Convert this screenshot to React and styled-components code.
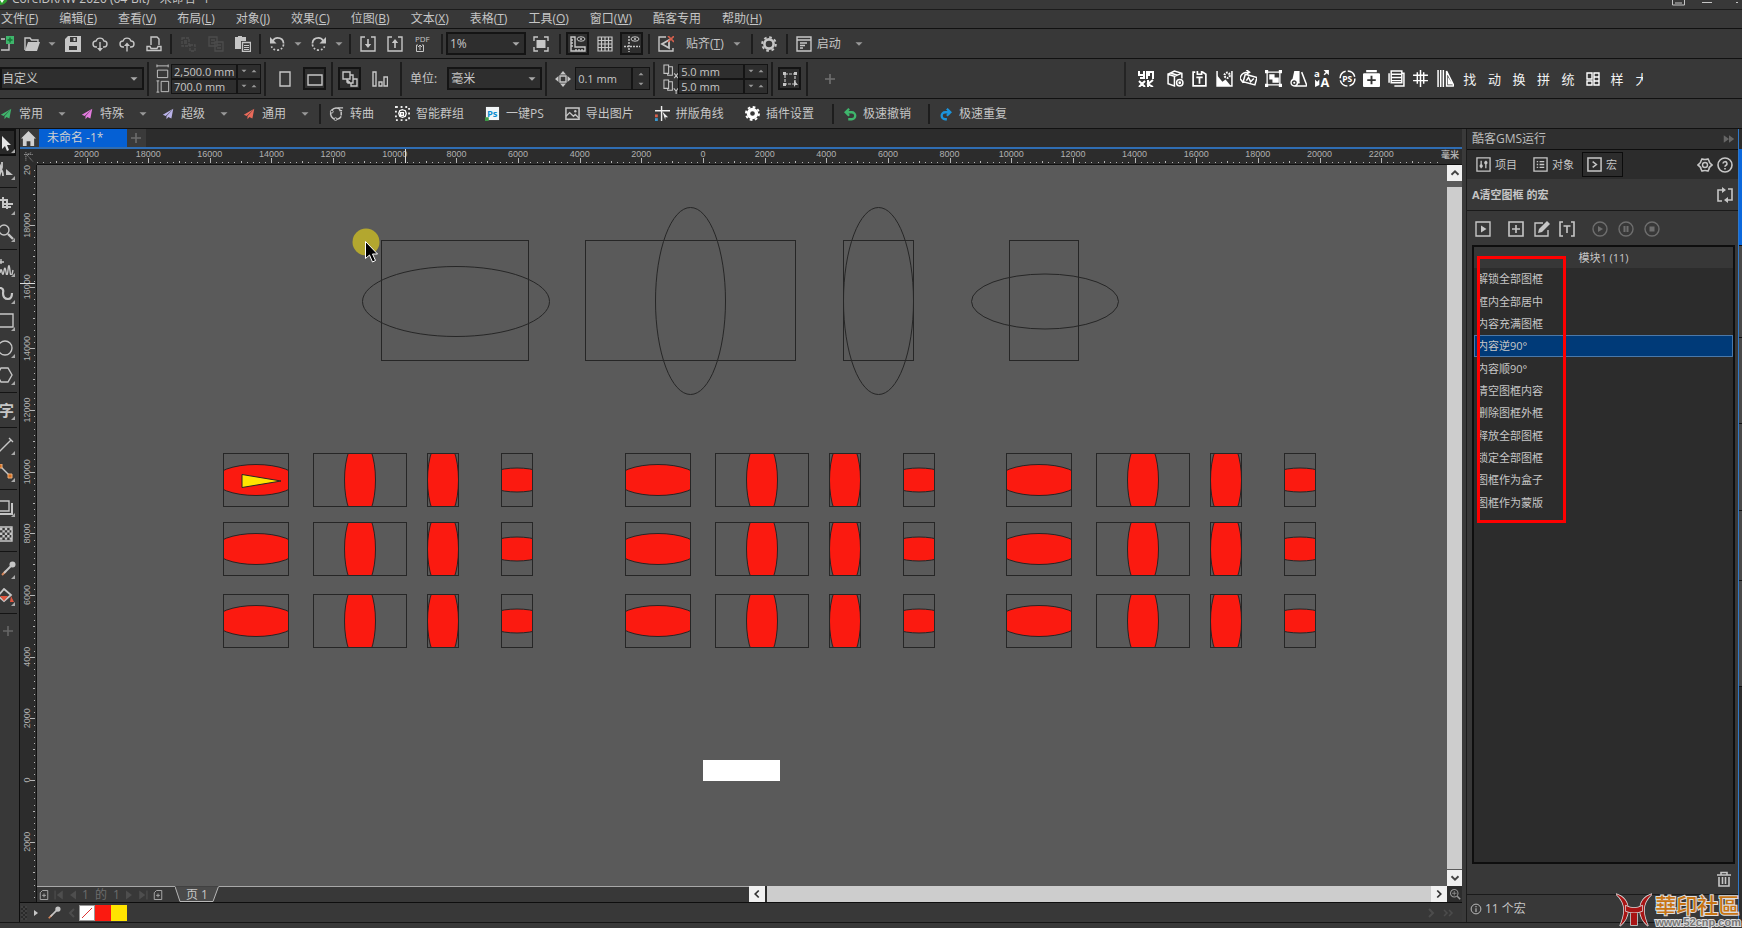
import React from "react";
import styled, { createGlobalStyle, css } from "styled-components";

const GlobalStyle = createGlobalStyle`
  * {
    box-sizing: border-box;
  }
  body {
    margin: 0;
    background: #383838;
    overflow: hidden;
  }
  button, input, select {
    font: inherit;
    color: inherit;
    margin: 0;
    padding: 0;
    border: 0;
    border-radius: 0;
    background: none;
    outline: none;
  }
  ul {
    list-style: none;
    margin: 0;
    padding: 0;
  }
`;

/* ---------- icons ---------- */

const line = { fill: "none", stroke: "currentColor", strokeWidth: 1.4 };
const white = { fill: "none", stroke: "#fff", strokeWidth: 1.4 };

const ICONS = {
  caret: <path fill="currentColor" d="M4 6h8l-4 4z" />,
  caretUp: <path fill="currentColor" d="M4 10h8l-4-4z" />,
  newDoc: <g><path {...line} d="M-4 3H4M-4 14H8V8" /><path fill="#3fb56c" d="M5 0h8v8H5z" /><path stroke="#173" strokeWidth="1.5" d="M9 1.5v5M6.5 4h5" /></g>,
  open: <g><path {...line} d="M1 14V2h5l1.5 2H14v2" /><path fill="currentColor" d="M4 6h12l-3 9H1z" /></g>,
  save: <g><path fill="currentColor" fillRule="evenodd" d="M3 0h13v16H0V3zM5 1v5h7V1zM4 10v4h8v-4z" /><path fill="currentColor" d="M8.5 2h2v3h-2z" /></g>,
  cloudDown: <g><path {...line} d="M5 11H4a3 3 0 0 1 0-6 4.2 4.2 0 0 1 8 0 3 3 0 0 1 0 6h-1" /><path fill="currentColor" d="M7.3 6h1.4v6H11l-3 3.5L5 12h2.3z" /></g>,
  cloudUp: <g><path {...line} d="M5 11H4a3 3 0 0 1 0-6 4.2 4.2 0 0 1 8 0 3 3 0 0 1 0 6h-1" /><path fill="currentColor" d="M7.3 15.5V10H5l3-3.5L11 10H8.7v5.5z" /></g>,
  print: <path {...line} d="M5 9V1h6l2 2v6M1 14.5v-4h3l1 2h6l1-2h3v4z" />,
  cut: <path {...line} strokeDasharray="3 1" d="M1 2h7v8H1zM3 5h3M3 7h3M9 9h5v6H9z" />,
  copy: <path {...line} d="M1 1h8v9H1zM3 4h4M3 7h4M7 6h8v9H7zM9 9h4M9 12h4" />,
  paste: <g><path fill="currentColor" d="M0 1h3V0h4v1h4v4H6v8H0z" /><path {...line} d="M7.5 6.5h8v9h-8z" /><path stroke="currentColor" d="M9 9.5h5M9 11.5h5M9 13.5h5" /></g>,
  undo: <g><path {...line} strokeWidth="1.8" d="M3 5q2-3 5-3 6 0 6.5 6" /><path {...line} strokeWidth="1.8" strokeDasharray="2 2" d="M14.5 9q-1 6-7 6-4 0-6-4" /><path fill="currentColor" d="M0 1v7h7z" /></g>,
  redo: <g><path {...line} strokeWidth="1.8" d="M13 5q-2-3-5-3-6 0-6.5 6" /><path {...line} strokeWidth="1.8" strokeDasharray="2 2" d="M1.5 9q1 6 7 6 4 0 6-4" /><path fill="currentColor" d="M16 1v7H9z" /></g>,
  importIcon: <g><path {...line} d="M5 1H1v14h14V1h-4" /><path fill="currentColor" d="M7.2 3h1.6v5h2.4L8 12 4.8 8h2.4z" /></g>,
  exportIcon: <g><path {...line} d="M5 1H1v14h14V1h-4" /><path fill="currentColor" d="M7.2 12h1.6V7h2.4L8 3 4.8 7h2.4z" /></g>,
  pdf: <g><text x="0" y="6" fontSize="8" fill="currentColor">PDF</text><path {...line} strokeWidth="1" d="M3 9H1.5v6.5h7V9H7M5 14V9M3 11l2-2 2 2" /></g>,
  fullscreen: <g><path {...line} d="M1 5V1h4M11 1h4v4M15 11v4h-4M5 15H1v-4" /><path fill="currentColor" d="M3.5 4h9v8h-9z" /></g>,
  rulers: <g><path {...line} d="M1 1h4v10h10v4H1zM1 4h2M1 7h2M1 10h2M6 15v-2M9 15v-2M12 15v-2" /><ellipse {...line} strokeWidth="1" cx="11" cy="3" rx="4" ry="2.2" /><circle cx="11" cy="3" r="1" fill="currentColor" /></g>,
  grid: <path {...line} strokeWidth="1.2" d="M1 1v14h14V1zM4.5 1v14M8 1v14M11.5 1v14M1 4.5h14M1 8h14M1 11.5h14" />,
  guides: <g><path {...line} strokeDasharray="2 1" d="M5 0v16M0 10.5h16" /><ellipse {...line} strokeWidth="1" cx="11" cy="3" rx="4" ry="2.2" /><circle cx="11" cy="3" r="1" fill="currentColor" /></g>,
  snap: <g><path {...line} d="M8 1H1v14h14v-3" /><path {...line} strokeWidth="1.8" d="M11 4L4 8l7 4z" /><path stroke="#d5604d" strokeWidth="1.6" d="M10 0l6 6M16 0l-6 6" /></g>,
  gear: <g><circle cx="8" cy="8" r="4.6" fill="none" stroke="currentColor" strokeWidth="2.6" /><circle cx="8" cy="8" r="6.8" fill="none" stroke="currentColor" strokeWidth="2" strokeDasharray="2.67 2.67" /></g>,
  launch: <path {...line} d="M1 1h14v14H1zM1 4h14M4 7h7M4 9.5h5M4 12h3" />,
  pageW: <path {...line} strokeWidth="1" d="M1 2h12M1 .5v3M13 .5v3M1.5 6.5h11v8h-11z" />,
  pageH: <path {...line} strokeWidth="1" d="M2 2v12M.5 2h3M.5 14h3M5.5 2.5h8v11h-8z" />,
  portrait: <path {...line} d="M3 1h10v14H3z" />,
  landscape: <path {...line} d="M1 4h14v10H1z" />,
  pagesAll: <path {...line} d="M1 1h7v7H1zM5 8v3h3M8 4h3v8H6V9M11 8h4v7H9v-3" />,
  pagesOne: <path {...line} d="M1 1v14h3V1zM7 11h3v4H7zM12 6h3.5v9H12z" />,
  nudge: <g><path {...line} d="M5 5h6v6H5z" /><path fill="currentColor" d="M8 0l3 3.5H5zM8 16l3-3.5H5zM0 8l3.5-3v6zM16 8l-3.5-3v6z" /></g>,
  dupX: <path {...line} strokeWidth="1.1" d="M1 1h5v9H1zM6 3h4v9H5v-2M12 10l4 5M16 10l-4 5" />,
  dupY: <path {...line} strokeWidth="1.1" d="M1 1h5v9H1zM6 3h4v9H5v-2M11.5 10l2.5 3 2-3M14 13v3" />,
  selectBox: <g><path {...line} strokeWidth="1.2" strokeDasharray="3 1" d="M3 3h10v10H3z" /><path fill="currentColor" d="M1 1h3v3H1zM12 1h3v3h-3zM1 12h3v3H1zM12 9v7l1.5-2H16z" /></g>,
  plus: <path stroke="currentColor" strokeWidth="1.6" d="M8 3v10M3 8h10" />,
  plane: <path fill="currentColor" d="M15 1 1 9l4 1.5zM15 1 6 11v4l2.5-3 4 2z" />,
  curve: <g><path {...line} strokeWidth="1.6" d="M12 4A6 6 0 1 0 13 11M13 10V6" /><path {...line} d="M9 2h6M11 5h3" /><circle cx="3" cy="6" r="1.5" fill="#383838" stroke="currentColor" /><circle cx="7" cy="14" r="1.5" fill="#383838" stroke="currentColor" /></g>,
  group: <g><rect x="1" y="1" width="14" height="14" fill="none" stroke="#eee" strokeWidth="2" strokeDasharray="2 3" /><path {...white} d="M8 4l3 1 1 3-1 3-3 1-3-1-1-3 1-3zM6 7h3v3H6z" /></g>,
  ps: <g><path fill="#f2f6f8" d="M1 1h14v14H1z" /><path fill="#3c9a46" d="M0 12h4v4H0z" /><text x="2" y="12" fontSize="10" fontWeight="bold" fill="#0c8ed0">Ps</text></g>,
  image: <g><path {...line} strokeWidth="1.6" d="M1 2h14v12H1z" /><path {...line} d="M1 11l4-4 4 4 2-2 4 4" /><circle cx="11" cy="5.5" r="1.3" fill="currentColor" /></g>,
  corner: <g><path stroke="#eee" strokeWidth="1.5" d="M7 0v16M0 5h16" /><path fill="#eee" d="M8 6l6 6h-3v3z" /><path fill="#d5604d" d="M0 9h3v3H0z" /><path fill="#3c9ad0" d="M0 13h3v3H0z" /></g>,
  gearSolid: <g><circle cx="8" cy="8" r="4.3" fill="none" stroke="#fff" strokeWidth="3.6" /><circle cx="8" cy="8" r="7" fill="none" stroke="#fff" strokeWidth="2" strokeDasharray="2.9 2.6" /></g>,
  turnBack: <path fill="none" stroke="currentColor" strokeWidth="2.6" d="M6 14h4a4 4 0 0 0 0-8H3M7 2L3 6l4 4" />,
  turnFwd: <path fill="none" stroke="currentColor" strokeWidth="2.6" d="M9 14H7a4 4 0 0 1 0-8h6M9 2l4 4-4 4" />,
  home: <path fill="currentColor" d="M8 0l8 8h-2v8h-4v-5H6v5H2V8H0z" />,
  origin: <path {...line} strokeDasharray="2 1" d="M3 0v14M0 4h14M5 5l9 10M4 4l8-3" />,
  // plug-in strip
  maze: <path {...white} strokeWidth="2" d="M1 0v4h5V0M6 4v3H2M9 8V1h2v4M11 1h4v7M1 10l6 6M7 10l-6 6M10 9v7M15 9l-5 4 5 3" />,
  boxGear: <g {...white}><path d="M1 4l6-3 7 2v5M1 4v9l6 2V6zM7 6l7-3M4 3l6 2" /><circle cx="12" cy="12" r="3" /><circle cx="12" cy="12" r=".6" /></g>,
  clipT: <path {...white} strokeWidth="1.6" d="M4 2H2v13h12V4l-3-2h-1M6 1v3h4V1M5 7h6M8 7v6" />,
  chartGear: <g><path {...white} d="M1 1v14h14V1" /><path fill="#fff" d="M1 5l5 6 3-2 5 6H1z" /><circle cx="10.5" cy="5" r="2.5" fill="none" stroke="#fff" strokeWidth="2" strokeDasharray="1.6 1" /></g>,
  rotateImg: <path {...white} d="M5 4l11 3-2 7L3 11zM0 8q1-6 8-6M6 0l3 2-3 2M6 10l2-3 2 4 3-3M0 8l3 4" />,
  frameSel: <g><path {...white} strokeWidth="1.2" d="M2 2h12v12H2z" /><path fill="#fff" d="M0 0h3v3H0zM13 0h3v3h-3zM0 13h3v3H0zM13 13h3v3h-3zM4 4h5v5H4zM7 7h6v5H7z" /></g>,
  roll: <g><path fill="#fff" d="M4 1h5v11l-3 1-4-3z" /><path {...white} d="M9 12H6M11 2l5 13H5" /><circle cx="4" cy="12" r="3" fill="#383838" stroke="#fff" strokeWidth="1.3" /><circle cx="4" cy="12" r="1" fill="#fff" /></g>,
  letters: <g fill="#fff"><text x="0" y="7" fontSize="9" fontWeight="bold">a</text><text x="6" y="16" fontSize="12" fontWeight="bold">A</text><path d="M9 0h5v5l-2-2-2 2-1-1 2-2zM1 16V9l2 2 2-2v5z" /></g>,
  psRound: <g><circle cx="8" cy="8" r="7" fill="none" stroke="#fff" strokeWidth="1.4" strokeDasharray="9 2" /><text x="3" y="11" fontSize="8" fontWeight="bold" fill="#fff">PS</text></g>,
  kit: <g><path fill="#fff" d="M3 0h10v2H3zM1 3h14q1 0 1 1v11q0 1-1 1H1q-1 0-1-1V4q0-1 1-1z" /><path stroke="#333" strokeWidth="1.8" d="M8 5.5v8M4 9.5h8" /></g>,
  docLines: <path {...white} d="M3 1h10v11H3zM3 4h10M3 7h10M3 10h10M13 3h2v12H6M1 3v9" />,
  hash: <path {...white} d="M8 0v16M1 5h14M1 10h14M5 2v11M11 2v11" />,
  ruleTri: <path {...white} d="M1 0v16M3.5 0v16M6 0v16M9 1v14h7zM11 9v4h2.5z" />,
  blocks: <path {...white} d="M2 2h5v6H2zM2 10h5v4H2zM9 2h5v4H9zM9 6h5v8H9zM9 10h5" />,
  // docker
  sliders: <g><path {...line} d="M1 1h14v14H1zM5.5 4v8M10.5 4v8" /><circle cx="5.5" cy="9.5" r="1.8" fill="currentColor" /><circle cx="10.5" cy="6" r="1.8" fill="currentColor" /></g>,
  objects: <path {...line} d="M1 1h14v14H1zM4 5h1.5M4 8h1.5M4 11h1.5M7 5h5M7 8h5M7 11h5" />,
  macro: <path {...line} strokeWidth="1.6" d="M1 1h14v14H1zM6 5l4 3-4 3" />,
  hexGear: <g><path {...line} strokeWidth="1.6" d="M5 2q3 1 6 0l1 2q0 2 3 4-3 2-3 4l-1 2q-3-1-6 0l-1-2q0-2-3-4 3-2 3-4z" /><circle {...line} cx="8" cy="8" r="2.5" /></g>,
  help: <g><circle {...line} strokeWidth="1.6" cx="8" cy="8" r="7" /><path {...line} strokeWidth="1.6" d="M6 6.5a2 2 0 1 1 2.8 2q-.8.4-.8 1.2M8 11v1.5" /></g>,
  loop: <g><path {...line} strokeWidth="1.6" d="M5 14H1V3h5M11 2h4v11h-5" /><path fill="currentColor" d="M5 0l4 3-4 3zM11 10l-4 3 4 3z" /></g>,
  runBox: <g><path {...line} d="M1 1h14v14H1z" /><path fill="currentColor" d="M6 4.5L11.5 8 6 11.5z" /></g>,
  addBox: <path {...line} strokeWidth="1.6" d="M1 1h14v14H1zM8 4v8M4 8h8" />,
  edit: <g><path {...line} d="M9 2H1v13h13V9" /><path fill="currentColor" d="M4 12l1-4 8-8 3 3-8 8z" /></g>,
  rename: <path {...line} strokeWidth="1.6" d="M4 1H1v14h3M12 1h3v14h-3M4.5 5h7M8 5v7" />,
  play: <g><circle {...line} cx="8" cy="8" r="7" /><path fill="currentColor" d="M6 5l5 3-5 3z" /></g>,
  pause: <g><circle {...line} cx="8" cy="8" r="7" /><path fill="currentColor" d="M5.5 5h2v6h-2zM8.5 5h2v6h-2z" /></g>,
  stop: <g><circle {...line} cx="8" cy="8" r="7" /><path fill="currentColor" d="M5.5 5.5h5v5h-5z" /></g>,
  trash: <path {...line} strokeWidth="1.6" d="M1 4h14M5 4V1.5h6V4M3 6v9h10V6M6.5 6v7M9.5 6v7" />,
  info: <g><circle {...line} strokeWidth="1.2" cx="8" cy="8" r="6.5" /><path {...line} d="M8 7v5M8 4v1.5" /></g>,
  collapse: <path fill="currentColor" d="M1 3l7 5-7 5zM8 3l7 5-7 5z" />,
  // scroll bars and page navigator
  up: <path fill="none" stroke="#444" strokeWidth="2.2" d="M4 10l4-4 4 4" />,
  down: <path fill="none" stroke="#444" strokeWidth="2.2" d="M4 6l4 4 4-4" />,
  left: <path fill="none" stroke="currentColor" strokeWidth="2" d="M10 4L6 8l4 4" />,
  right: <path fill="none" stroke="currentColor" strokeWidth="2" d="M6 4l4 4-4 4" />,
  right2: <path fill="none" stroke="currentColor" strokeWidth="1.5" d="M3 5l3 3-3 3M8 5l3 3-3 3" />,
  zoomAll: <g><circle {...line} cx="7" cy="7" r="5" /><path {...line} strokeWidth="1" d="M7 4v6M4 7h6" /><path {...line} strokeWidth="2" d="M11 11l4 4" /></g>,
  pageAdd: <path {...line} strokeWidth="1.3" d="M6 2h7v12H3V5zM8 6v5M5.5 8.5h5" />,
  first: <path fill="currentColor" d="M2 2h1.5v12H2zM13 2v12L5 8z" />,
  prev: <path fill="currentColor" d="M12 2v12L4 8z" />,
  next: <path fill="currentColor" d="M4 2v12l8-6z" />,
  last: <path fill="currentColor" d="M12.5 2H14v12h-1.5zM3 2v12l8-6z" />,
  dropper: <g><path stroke="#d8875b" strokeWidth="2" d="M2 14l4-4" /><path stroke="currentColor" strokeWidth="2" d="M4 12l7-7" /><circle cx="12.5" cy="3.5" r="3" fill="currentColor" /></g>,
  // toolbox, partly hidden by the window edge
  pick: <path fill="#e4e4e4" d="M2 1v13l3-3 2 5 2-1-2-5h4z" />,
  shape: <g><path {...line} strokeWidth="1.8" d="M-2 2q3 0 2 5M2 0v5l-3 10M0 7q3 1 3 7" /><path fill="currentColor" d="M6 7l7 6H6z" /></g>,
  crop: <path {...line} strokeWidth="2" d="M-2 3H7v4M3 0v7h10M7 7v5M3 7v3h8" />,
  zoom: <g><circle {...line} cx="4" cy="6" r="5" /><path {...line} strokeWidth="2.4" d="M8 10l5 5" /></g>,
  freehand: <path {...line} d="M1 0v5M-2 3h6M0 14q1-6 2-1t2-1 2 1 2-2 2 1 3-1" />,
  bezier: <path {...line} strokeWidth="2.2" d="M-2 2H1q3 1 2 5 0 6 5 6 4 0 4-6" />,
  rect: <path {...line} d="M-2 1h15v13H-2" />,
  ellipse: <circle {...line} cx="5" cy="8" r="7" />,
  polygon: <path {...line} d="M1 1h7l4 7-4 7H1l-4-7z" />,
  lineTool: <path {...line} d="M-1 15L11 3M9 1l4 4" />,
  connector: <g><path {...line} d="M1 3l9 9" /><path fill="#d96f1e" stroke="#e8b080" d="M-2 0h4v4h-4zM8 10h4v4H8z" /></g>,
  shadow: <g><path {...line} d="M-2 2h11v10H-2" /><path {...line} strokeWidth="2" d="M12 4v11H0" /></g>,
  checker: <g><path {...line} d="M-2 1h14v14H-2" /><path stroke="currentColor" strokeWidth="2.4" strokeDasharray="2.4 2.4" d="M0 3h12M2.4 5.4h10M0 7.8h12M2.4 10.2h10M0 12.6h12" /></g>,
  fill: <g><path {...line} strokeWidth="1.8" d="M4 1l7 6-7 6-6-5z" /><path fill="#e0563f" d="M0 8h8l-4 5zM11 8l3 6h-4z" /></g>,
};

function Icon({ name, size = 16, color }) {
  return (
    <svg width={size} height={size} viewBox="0 0 16 16" color={color} aria-hidden="true">
      {ICONS[name]}
    </svg>
  );
}

/* ---------- shared parts ---------- */

const Window = styled.div`
  position: relative;
  display: flex;
  flex-direction: column;
  height: 100vh;
  overflow: hidden;
  background: #383838;
  color: #c6c6c6;
  font: 12px/16px "Open Sans", "Noto Sans CJK SC", sans-serif;
  white-space: nowrap;

  svg {
    display: block;
    flex: none;
  }
`;

const TitleBar = styled.header`
  display: flex;
  align-items: flex-end;
  height: 10px;
  overflow: hidden;
  border-bottom: 1px solid #1c1c1c;

  svg {
    margin-right: 4px;
  }
  span {
    flex: 1;
    height: 18px;
  }
`;

const MenuBar = styled.nav`
  display: flex;
  align-items: center;
  gap: 21px;
  height: 19px;
  padding-left: 1px;
  border-bottom: 1px solid #111;
`;

const Bar = styled.div`
  display: flex;
  align-items: center;
  height: ${(p) => p.$h || 30}px;
  border-bottom: 1px solid #111;
`;

const Sep = styled.i`
  flex: none;
  width: 2px;
  height: ${(p) => p.$h || 20}px;
  margin: 0 3px;
  background: #1d1d1d;
`;

const IconButton = styled.button`
  flex: none;
  display: flex;
  align-items: center;
  justify-content: center;
  width: ${(p) => p.$w || 27}px;
  height: 22px;
  color: ${(p) => (p.disabled ? "#4c4c4c" : "#c6c6c6")};
  ${(p) =>
    p.$on &&
    css`
      width: 23px;
      height: 23px;
      margin: 0 2px;
      border: 2px solid #141414;
      background: #2e2e2e;
    `}
`;

const CaretButton = styled(IconButton)`
  width: 14px;
  justify-content: flex-start;
  color: #999;
`;

const TextButton = styled.button`
  display: flex;
  align-items: center;
  gap: ${(p) => p.$gap || 6}px;
  padding: ${(p) => p.$pad || "0"};
`;

const PlaneButton = styled(TextButton)`
  width: ${(p) => (p.$last ? 73 : 81)}px;
  gap: 7px;

  svg:last-child {
    margin-left: 5px;
  }
`;

const PluginButtons = styled.div`
  display: flex;
  align-items: center;
  gap: 21px;
  padding: 0 15px 0 5px;
`;

const Combo = styled.label`
  position: relative;
  flex: none;
  display: block;
  width: ${(p) => p.$w}px;
  height: 23px;
  border: 2px solid #141414;
  background: #2e2e2e;

  select {
    appearance: none;
    width: 100%;
    height: 19px;
    padding-left: ${(p) => p.$left ?? 2}px;
  }
  svg {
    position: absolute;
    right: 1px;
    top: 3px;
    color: #aaa;
    pointer-events: none;
  }
`;

const Spin = styled.label`
  flex: none;
  display: flex;
  align-items: center;
  width: ${(p) => p.$w}px;
  height: ${(p) => p.$h || 15}px;
  border: 1px solid #141414;
  background: #2e2e2e;
  font-size: 11px;

  input {
    flex: 1;
    min-width: 0;
    height: 100%;
    padding-left: 2px;
    border-right: 2px solid #141414;
  }
  > span {
    display: flex;
    flex-direction: ${(p) => (p.$h ? "column" : "row")};
    justify-content: center;
    width: ${(p) => (p.$h ? 16 : 22)}px;
    align-items: center;
    color: #999;
  }
`;

const Stack = styled.div`
  display: flex;
  flex-direction: column;
  justify-content: center;
  margin: ${(p) => p.$m || "0"};
`;

const UnitLabel = styled.span`
  margin: 0 10px 0 5px;
`;

const PluginStrip = styled.div`
  display: flex;
  align-items: center;
  margin-left: auto;
  margin-right: 88px;
  padding-left: 6px;
  height: 34px;
  border-left: 2px solid #242424;

  > div {
    display: flex;
    width: 491px;
    margin-left: 3px;
  }
  > div > button {
    flex: 1;
    min-width: 0;
  }
`;

const Glyph = styled.button`
  height: 22px;
  overflow: hidden;
  color: #f2f2f2;
  font-size: 13px;
  line-height: 20px;
  text-align: center;

  span {
    display: block;
    width: ${(p) => (p.$cut ? "8px" : "auto")};
    margin-left: ${(p) => (p.$cut ? 6 : 0)}px;
    overflow: hidden;
  }
`;

const Workspace = styled.div`
  flex: 1;
  min-height: 0;
  display: flex;
`;

const StatusStrip = styled.footer`
  height: 6px;
  border-top: 1px solid #161616;
`;

/* ---------- toolbox ---------- */

const ToolColumn = styled.aside`
  flex: none;
  width: 20px;
  border-right: 1px solid #0e0e0e;

  hr {
    height: 1px;
    margin: 4px 2px 3px 0;
    border: 0;
    background: #141414;
  }
`;

const Tool = styled.button`
  display: block;
  position: relative;
  width: 16px;
  height: 27px;
  color: ${(p) => (p.$dim ? "#666" : "#c6c6c6")};
  font-size: 15px;
  font-weight: bold;
  ${(p) =>
    p.$on &&
    css`
      background: #282828;
      box-shadow: inset 0 2px #111, inset -2px 0 #111, inset 0 -2px #111;
    `}

  em {
    display: block;
    margin-left: -3px;
    font-style: normal;
  }
  &::after {
    content: "";
    position: absolute;
    right: 1px;
    bottom: 3px;
    border: 2px solid transparent;
    border-right-color: #aaa;
    border-bottom-color: #aaa;
    display: ${(p) => (p.$flat ? "none" : "block")};
  }
`;

/* ---------- document ---------- */

const Doc = styled.main`
  flex: 1;
  min-width: 0;
  display: flex;
  flex-direction: column;
  background: #2c2c2c;
`;

const DocTabs = styled.div`
  display: flex;
  height: 20px;
  border-bottom: 2px solid #2f6db3;
`;

const DocTab = styled.button`
  width: ${(p) => p.$w}px;
  padding-left: ${(p) => (p.$active ? 8 : 1)}px;
  text-align: left;
  background: ${(p) => (p.$active ? "#0560d4" : "#3a3a3a")};
  color: ${(p) => (p.$dim ? "#6d6d6d" : "#d0d0d0")};
`;

const Frame = styled.div`
  flex: 1;
  min-height: 0;
  display: grid;
  grid-template-columns: 17px 1fr 15px;
  grid-template-rows: 16px 1fr 16px;

  > svg {
    width: 100%;
    height: 100%;
  }
`;

const Corner = styled.div`
  display: flex;
  align-items: center;
  justify-content: center;
  color: #999;
`;

const TopRuler = styled.svg`
  grid-column: 2 / 4;
  border-bottom: 1px solid #111;
  font-family: "Liberation Sans", "Noto Sans CJK SC", sans-serif;
`;

const SideRuler = styled.svg`
  grid-row: 2 / 4;
  grid-column: 1;
  border-right: 1px solid #111;
  font-family: "Liberation Sans", sans-serif;
`;

const Canvas = styled.svg`
  background: #5a5a5a;
`;

const VScroll = styled.div`
  display: flex;
  flex-direction: column;
  background: #5a5a5a;
`;

const ScrollButton = styled.button`
  flex: none;
  display: flex;
  align-items: center;
  justify-content: center;
  width: ${(p) => p.$w || 15}px;
  height: 16px;
  background: #f0f0f0;
  color: #333;
`;

const VThumb = styled.div`
  flex: 1;
  margin: 6px 0 1px;
  background: #cdcdcd;
`;

const HThumb = styled.div`
  flex: 1;
  margin-left: 2px;
  background: #cdcdcd;
`;

const PageRow = styled.div`
  display: grid;
  grid-template-columns: 712fr 698fr;
`;

const PageNav = styled.div`
  display: flex;
  min-width: 0;
  background: #383838;
`;

const NavButtons = styled.div`
  display: flex;
  align-items: center;
  justify-content: space-between;
  width: 138px;
  padding: 0 11px 0 1px;
  border-top: 1px solid #a8a8a8;
  color: #4e4e4e;

  button:first-child, button:last-child {
    color: #a8a8a8;
  }
`;

const PageCount = styled.div`
  display: flex;
  gap: 6px;
  color: #6c6c6c;
`;

const PageTab = styled.button`
  position: relative;
  width: 44px;
  color: #c6c6c6;
  line-height: 15px;

  svg {
    position: absolute;
    inset: 0;
  }
  span {
    position: relative;
  }
`;

const NavRest = styled.div`
  flex: 1;
  border-top: 1px solid #a8a8a8;
`;

const HScroll = styled.div`
  display: flex;
`;

const Palette = styled.div`
  display: flex;
  align-items: center;
  height: 20px;
  padding: 0 6px 0 1px;
  border-top: 1px solid #0e0e0e;
  background: #383838;
`;

const Grip = styled.i`
  width: 6px;
  height: 14px;
  background: repeating-conic-gradient(#2a2a2a 0 25%, #404040 0 50%) 0 0 / 4px 4px;
`;

const Swatch = styled.button`
  width: 16px;
  height: 16px;
  background: ${(p) => p.$color};
  border: 1px solid ${(p) => (p.$none ? "#999" : p.$color)};
`;

const PaletteEnd = styled.div`
  display: flex;
  margin-left: auto;
`;

/* ---------- docker ---------- */

const Docker = styled.aside`
  position: relative;
  flex: none;
  display: flex;
  flex-direction: column;
  width: 276px;
  border-left: 4px solid #3a3a3a;
  box-shadow: inset 1px 0 #1c1c1c;
  padding-left: 1px;
`;

const DockHead = styled.div`
  display: flex;
  align-items: center;
  justify-content: space-between;
  height: 21px;
  padding: 0 3px 0 5px;
  border-bottom: 1px solid #0e0e0e;
  background: #2f2f2f;
  color: #bdbdbd;
`;

const DockTabs = styled.div`
  display: flex;
  align-items: center;
  height: 29px;
  padding: 0 3px 0 4px;
  background: #2c2c2c;
  font-size: 11px;
`;

const DockTab = styled.button`
  display: flex;
  align-items: center;
  gap: 4px;
  height: 25px;
  padding: 0 5px 0 4px;
  margin-right: 5px;
  border: 1px solid transparent;

  &:nth-child(2) {
    margin-right: 2px;
  }
  &:nth-child(3) {
    margin-right: auto;
    border-color: #0c0c0c;
  }
`;

const DockTitle = styled.h2`
  display: flex;
  align-items: center;
  justify-content: space-between;
  height: 32px;
  margin: 0;
  padding: 0 5px;
  border-bottom: 1px solid #1a1a1a;
  font-size: 11px;
  font-weight: bold;
`;

const DockTools = styled.div`
  display: flex;
  align-items: center;
  gap: 7px;
  height: 34px;
  padding: 2px 0 0 3px;

  div {
    display: flex;
  }
  button:disabled {
    color: #6e6e6e;
  }
`;

const MacroBox = styled.section`
  flex: 1;
  margin: 0 3px 0 5px;
  border: 2px solid #0e0e0e;
  background: #2c2c2c;
  font-size: 11px;

  h3 {
    height: 21px;
    margin: 0;
    background: #373737;
    font-size: 11px;
    font-weight: normal;
    line-height: 21px;
    text-align: center;
  }
  ul {
    display: grid;
    grid-template-rows: repeat(11, 1fr);
    height: 246px;
  }
`;

const MacroItem = styled.button`
  display: block;
  width: 100%;
  height: 100%;
  padding-left: 2px;
  text-align: left;
  border: 1px solid ${(p) => (p.$on ? "#4b78a8" : "transparent")};
  background: ${(p) => (p.$on ? "#003a78" : "none")};
`;

const TrashRow = styled.div`
  display: flex;
  justify-content: flex-end;
  align-items: center;
  height: 31px;
  padding-right: 6px;
  border-bottom: 1px solid #1a1a1a;
`;

const DockStatus = styled.div`
  display: flex;
  align-items: center;
  gap: 3px;
  height: 27px;
  padding-left: 3px;
`;

const Marker = styled.div`
  position: absolute;
  left: 11px;
  top: 127px;
  width: 89px;
  height: 267px;
  border: 3px solid #f00;
  pointer-events: none;
`;

const EdgeTabs = styled.div`
  flex: none;
  width: 4px;
  padding-top: 20px;
  border-left: 1px solid #2f78c8;
  background: #2c2c2c;
`;

const EdgeTab = styled.div`
  height: ${(p) => p.$h}px;
  background: ${(p) => (p.$on ? "#0b68dc" : "#484848")};
  border-bottom: 1px solid #111;
`;

/* ---------- watermark ---------- */

const Watermark = styled.div`
  position: absolute;
  right: 1px;
  bottom: 1px;
  display: flex;
  align-items: center;
  gap: 3px;
`;

const MarkText = styled.div`
  display: flex;
  flex-direction: column;
  paint-order: stroke fill;

  b {
    margin-bottom: 2px;
    color: #c87412;
    font: 500 21px/22px "Noto Sans CJK TC", sans-serif;
    -webkit-text-stroke: 2px #ddd;
  }
  small {
    color: #777;
    font: bold 11px/10px "Liberation Sans", sans-serif;
    text-align: center;
    -webkit-text-stroke: 2px #ddd;
  }
`;

/* ---------- data ---------- */

const MENUS = [
  ["文件", "F"], ["编辑", "E"], ["查看", "V"], ["布局", "L"], ["对象", "J"],
  ["效果", "C"], ["位图", "B"], ["文本", "X"], ["表格", "T"], ["工具", "O"],
  ["窗口", "W"], ["酷客专用"], ["帮助", "H"],
];

const PLANES = [
  ["常用", "#3fb56c"],
  ["特殊", "#e57be0"],
  ["超级", "#b9b2e8"],
  ["通用", "#ea6a5a"],
];

const PLUGINS = [
  ["curve", "转曲"], ["group", "智能群组"], ["ps", "一键PS"],
  ["image", "导出图片"], ["corner", "拼版角线"], ["gearSolid", "插件设置"],
];

const STRIP_ICONS = [
  "boxGear", "clipT", "chartGear", "rotateImg", "frameSel", "roll",
  "letters", "psRound", "kit", "docLines", "hash", "ruleTri",
];

const TOOLS = [
  "pick", "shape", "|", "crop", "zoom", "|", "freehand", "bezier", "rect", "ellipse",
  "polygon", "|", "字", "|", "lineTool", "connector", "|", "shadow", "checker", "|",
  "dropper", "fill", "|", "plus",
];

const MACROS = [
  "解锁全部图框", "框内全部居中", "内容充满图框", "内容逆90°", "内容顺90°", "清空图框内容",
  "删除图框外框", "释放全部图框", "锁定全部图框", "图框作为盒子", "图框作为蒙版",
];

const STEP = 61.65; // px for 2000 mm at 1% zoom

// frames of one group: x, width, ellipse rx, ry
const FRAMES = [
  [223.5, 65, 41.5, 15.5],
  [313.5, 93, 15.5, 41.5],
  [427.5, 31, 15.5, 41.5],
  [501.5, 31, 32.5, 12],
];

// empty frames on top: x, width, ellipse cx, rx, ry
const OUTLINES = [
  [381.5, 147, 456, 93.5, 35],
  [585.5, 210, 690.5, 35, 93.5],
  [843.5, 70, 878.5, 35, 93.5],
  [1009.5, 69, 1045, 73.5, 27.5],
];

/* ---------- pieces ---------- */

function ticks(zero, length, vertical, base) {
  const out = [];
  const minor = STEP / 10;
  const start = Math.ceil(-zero / minor);
  for (let i = start; zero + i * minor < length; i++) {
    const at = Math.round(zero + i * minor) + 0.5;
    const size = i % 10 === 0 ? 5 : i % 5 === 0 ? 2 : 1;
    out.push(vertical ? `M${base} ${at}h${-size}` : `M${at} ${base}v${-size}`);
  }
  return out.join("");
}

function HRuler() {
  const zero = 666;
  const labels = [];
  for (let i = -10; i <= 11; i++) labels.push(i);
  return (
    <TopRuler>
      <path stroke="#b4b4b4" d={ticks(zero, 1400, false, 14)} />
      <g fill="#b0b0b0" fontSize="9" textAnchor="middle">
        {labels.map((i) => (
          <text key={i} x={zero + i * STEP} y="8">{Math.abs(i) * 2000}</text>
        ))}
        <text x="1413" y="9" fontWeight="bold">毫米</text>
      </g>
      <path stroke="#ddd" d="M368.5 0v14" />
    </TopRuler>
  );
}

function VRuler() {
  const zero = 615;
  const labels = [];
  for (let i = -9; i <= 1; i++) labels.push(i);
  return (
    <SideRuler>
      <path stroke="#b4b4b4" d={ticks(zero, 740, true, 15)} />
      <g fill="#b0b0b0" fontSize="9" textAnchor="middle">
        <text transform="translate(10 5) rotate(-90)">20</text>
        {labels.map((i) => (
          <text key={i} transform={`translate(10 ${zero + i * STEP}) rotate(-90)`}>
            {Math.abs(i) * 2000}
          </text>
        ))}
      </g>
      <path stroke="#ddd" d="M0 118.5h15" />
    </SideRuler>
  );
}

function Drawing() {
  return (
    <Canvas>
      <defs>
        {FRAMES.map(([x, w], i) => (
          <clipPath id={`frame${i}`} key={x}>
            <rect x={x} y="0" width={w} height="53" />
          </clipPath>
        ))}
      </defs>
      <g transform="translate(-37 -165)">
        <g fill="none" stroke="#262626">
          {OUTLINES.map(([x, w, cx, rx, ry]) => (
            <g key={x}>
              <rect x={x} y="240.5" width={w} height="120" />
              <ellipse cx={cx} cy={ry > 50 ? 301 : 301.5} rx={rx} ry={ry} />
            </g>
          ))}
        </g>
        {[0, 402, 783].map((dx) =>
          [453.5, 522.5, 594.5].map((y) => (
            <g key={dx + y} transform={`translate(${dx} ${y})`} stroke="#262626">
              {FRAMES.map(([x, w, rx, ry], i) => (
                <g key={x}>
                  <g clipPath={`url(#frame${i})`}>
                    <ellipse cx={x + w / 2} cy="26.5" rx={rx} ry={ry} fill="#fb1a10" />
                  </g>
                  <rect x={x} y="0" width={w} height="53" fill="none" />
                </g>
              ))}
            </g>
          ))
        )}
        <path fill="#ffe400" stroke="#262626" d="M242 474.5v13l39-6.5z" />
        <rect x="703" y="760" width="77" height="21" fill="#fff" />
        <circle cx="366" cy="242" r="13.5" fill="#b3a72f" />
        <path fill="#000" stroke="#fff" d="M365.5 241.5v17l4-3.5 3 7 3-1.5-3-6.5h5z" />
      </g>
    </Canvas>
  );
}

function Spinner({ label, value, w, h }) {
  return (
    <Spin $w={w} $h={h}>
      <input aria-label={label} defaultValue={value} />
      <span>
        {h ? <Icon name="caretUp" size={10} /> : <Icon name="caret" size={10} />}
        {h ? <Icon name="caret" size={10} /> : <Icon name="caretUp" size={10} />}
      </span>
    </Spin>
  );
}

function Tb({ icon, on, disabled, w, size }) {
  return (
    <IconButton aria-label={icon} $on={on} $w={w} disabled={disabled}>
      <Icon name={icon} size={size} />
    </IconButton>
  );
}

function Caret() {
  return (
    <CaretButton aria-label="more">
      <Icon name="caret" size={14} />
    </CaretButton>
  );
}

function StandardBar() {
  return (
    <Bar>
      <Tb icon="newDoc" w={18} />
      <Tb icon="open" />
      <Caret />
      <Tb icon="save" />
      <Tb icon="cloudDown" />
      <Tb icon="cloudUp" />
      <Tb icon="print" />
      <Sep />
      <Tb icon="cut" disabled />
      <Tb icon="copy" disabled />
      <Tb icon="paste" />
      <Sep />
      <Tb icon="undo" size={15} />
      <Caret />
      <Tb icon="redo" size={15} />
      <Caret />
      <Sep />
      <Tb icon="importIcon" />
      <Tb icon="exportIcon" />
      <Tb icon="pdf" w={30} />
      <Sep />
      <Combo $w={80}>
        <select aria-label="缩放级别"><option>1%</option></select>
        <Icon name="caret" size={14} />
      </Combo>
      <Tb icon="fullscreen" w={30} />
      <Sep />
      <Tb icon="rulers" on />
      <Tb icon="grid" />
      <Tb icon="guides" on />
      <Sep />
      <Tb icon="snap" w={26} />
      <TextButton $pad="0 4px 0 7px">
        <span>贴齐(<u>T</u>)</span>
        <Icon name="caret" size={14} color="#999" />
      </TextButton>
      <Sep />
      <Tb icon="gear" />
      <Sep />
      <Tb icon="launch" w={26} />
      <TextButton $gap={11}>
        启动
        <Icon name="caret" size={14} color="#999" />
      </TextButton>
    </Bar>
  );
}

function PropertyBar() {
  return (
    <Bar $h={40}>
      <Combo $w={144} $left={0}>
        <select aria-label="页面大小"><option>自定义</option></select>
        <Icon name="caret" size={14} />
      </Combo>
      <Sep $h={34} />
      <Stack $m="0 0 0 4px">
        <Icon name="pageW" size={15} />
        <Icon name="pageH" size={15} />
      </Stack>
      <Stack>
        <Spinner label="页面宽度" value="2,500.0 mm" w={90} />
        <Spinner label="页面高度" value="700.0 mm" w={90} />
      </Stack>
      <Sep $h={34} />
      <Tb icon="portrait" w={32} />
      <Tb icon="landscape" on />
      <Sep $h={34} />
      <Tb icon="pagesAll" w={27} on />
      <Tb icon="pagesOne" w={34} />
      <Sep $h={34} />
      <UnitLabel>单位:</UnitLabel>
      <Combo $w={95}>
        <select aria-label="单位"><option>毫米</option></select>
        <Icon name="caret" size={14} />
      </Combo>
      <Sep $h={34} />
      <Tb icon="nudge" w={25} />
      <Spinner label="微调距离" value="0.1 mm" w={75} h={23} />
      <Sep $h={34} />
      <Stack $m="0 0 0 5px">
        <Icon name="dupX" size={15} />
        <Icon name="dupY" size={15} />
      </Stack>
      <Stack>
        <Spinner label="再制距离 X" value="5.0 mm" w={90} />
        <Spinner label="再制距离 Y" value="5.0 mm" w={90} />
      </Stack>
      <Sep $h={34} />
      <Tb icon="selectBox" on />
      <Sep $h={34} />
      <IconButton $w={38} disabled aria-label="add"><Icon name="plus" color="#707070" /></IconButton>
      <PluginStrip>
        <Tb icon="maze" w={28} />
        <div>
          {STRIP_ICONS.map((name) => <Tb key={name} icon={name} size={17} />)}
          {["找", "动", "换", "拼", "统"].map((t) => <Glyph key={t}><span>{t}</span></Glyph>)}
          <Tb icon="blocks" />
          <Glyph><span>样</span></Glyph>
          <Glyph $cut><span>大</span></Glyph>
        </div>
      </PluginStrip>
    </Bar>
  );
}

function PluginBar() {
  return (
    <Bar>
      {PLANES.map(([text, color], i) => (
        <PlaneButton key={text} $last={i === PLANES.length - 1}>
          <Icon name="plane" size={12} color={color} />
          {text}
          <Icon name="caret" size={14} color="#999" />
        </PlaneButton>
      ))}
      <Sep />
      <PluginButtons>
        {PLUGINS.map(([icon, text]) => (
          <TextButton key={text}><Icon name={icon} size={15} />{text}</TextButton>
        ))}
      </PluginButtons>
      <Sep />
      <TextButton $pad="0 14px 0 6px"><Icon name="turnBack" color="#3fb56c" size={14} />极速撤销</TextButton>
      <Sep />
      <TextButton $pad="0 0 0 6px"><Icon name="turnFwd" color="#1c94dc" size={14} />极速重复</TextButton>
    </Bar>
  );
}

function Toolbox() {
  return (
    <ToolColumn>
      {TOOLS.map((name, i) =>
        name === "|" ? (
          <hr key={i} />
        ) : (
          <Tool key={i} aria-label={name} $on={i === 0} $flat={name === "plus" || name === "checker"} $dim={name === "plus"}>
            {ICONS[name] ? <Icon name={name} /> : <em>{name}</em>}
          </Tool>
        )
      )}
    </ToolColumn>
  );
}

function Document() {
  return (
    <Doc>
      <DocTabs>
        <DocTab $w={19} aria-label="home"><Icon name="home" size={15} /></DocTab>
        <DocTab $w={88} $active>未命名 -1*</DocTab>
        <DocTab $w={19} $dim aria-label="new tab"><Icon name="plus" /></DocTab>
      </DocTabs>
      <Frame>
        <Corner><Icon name="origin" size={10} /></Corner>
        <HRuler />
        <VRuler />
        <Drawing />
        <VScroll>
          <ScrollButton aria-label="up"><Icon name="up" size={14} /></ScrollButton>
          <VThumb />
          <ScrollButton aria-label="down"><Icon name="down" size={14} /></ScrollButton>
        </VScroll>
        <PageRow>
          <PageNav>
            <NavButtons>
              <button aria-label="add before"><Icon name="pageAdd" size={12} /></button>
              <button aria-label="first"><Icon name="first" size={12} /></button>
              <button aria-label="previous"><Icon name="prev" size={12} /></button>
              <PageCount><span>1</span><span>的</span><span>1</span></PageCount>
              <button aria-label="next"><Icon name="next" size={12} /></button>
              <button aria-label="last"><Icon name="last" size={12} /></button>
              <button aria-label="add after"><Icon name="pageAdd" size={12} /></button>
            </NavButtons>
            <PageTab>
              <svg width="44" height="16"><path fill="#4a4a4a" stroke="#b8b8b8" d="M0 .5l5 15h33l5.5-15" /></svg>
              <span>页 1</span>
            </PageTab>
            <NavRest />
          </PageNav>
          <HScroll>
            <ScrollButton $w={16} aria-label="left"><Icon name="left" size={14} /></ScrollButton>
            <HThumb />
            <ScrollButton $w={16} aria-label="right"><Icon name="right" size={14} /></ScrollButton>
          </HScroll>
        </PageRow>
        <Corner><Icon name="zoomAll" size={12} /></Corner>
      </Frame>
      <Palette>
        <Grip />
        <IconButton $w={17} aria-label="menu"><Icon name="next" size={8} /></IconButton>
        <IconButton $w={20} aria-label="dropper"><Icon name="dropper" size={14} /></IconButton>
        <IconButton $w={15} disabled aria-label="previous"><Icon name="left" /></IconButton>
        <Swatch $color="#fff" $none aria-label="none">
          <svg width="14" height="14"><path stroke="#d33" d="M2 12L12 2" /></svg>
        </Swatch>
        <Swatch $color="#fb1a10" aria-label="red" />
        <Swatch $color="#ffe400" aria-label="yellow" />
        <PaletteEnd>
          <IconButton $w={20} disabled aria-label="next"><Icon name="right" /></IconButton>
          <IconButton $w={15} disabled aria-label="last"><Icon name="right2" /></IconButton>
        </PaletteEnd>
      </Palette>
    </Doc>
  );
}

function MacroDocker() {
  return (
    <Docker>
      <DockHead>酷客GMS运行<Icon name="collapse" size={12} color="#666" /></DockHead>
      <DockTabs>
        <DockTab><Icon name="sliders" size={15} />项目</DockTab>
        <DockTab><Icon name="objects" size={15} />对象</DockTab>
        <DockTab><Icon name="macro" size={15} />宏</DockTab>
        <Tb icon="hexGear" w={20} />
        <Tb icon="help" w={20} />
      </DockTabs>
      <DockTitle>A清空图框 的宏<Icon name="loop" /></DockTitle>
      <DockTools>
        <Tb icon="runBox" w={26} />
        <div>
          <Tb icon="addBox" w={26} />
          <Tb icon="edit" w={25} />
          <Tb icon="rename" w={26} />
        </div>
        <div>
          <Tb icon="play" w={26} disabled />
          <Tb icon="pause" w={26} disabled />
          <Tb icon="stop" w={25} disabled />
        </div>
      </DockTools>
      <MacroBox>
        <h3>模块1 (11)</h3>
        <ul>
          {MACROS.map((name, i) => (
            <li key={name}><MacroItem $on={i === 3}>{name}</MacroItem></li>
          ))}
        </ul>
      </MacroBox>
      <TrashRow><button aria-label="delete"><Icon name="trash" /></button></TrashRow>
      <DockStatus><Icon name="info" size={12} />11 个宏</DockStatus>
      <Marker />
    </Docker>
  );
}

function App() {
  return (
    <Window>
      <GlobalStyle />
      <TitleBar>
        <svg width="8" height="9"><circle cx="0" cy="-3" r="8" fill="#2f9e2f" /><path fill="#fff" d="M0 0h4l-2 3z" /></svg>
        <span>CorelDRAW 2020 (64-Bit) - 未命名 -1</span>
        <svg width="72" height="9"><path fill="none" stroke="#c6c6c6" d="M6.5 0v5h12V0M9 3h7M36 2.5h10M70 2.5h2" /></svg>
      </TitleBar>
      <MenuBar>
        {MENUS.map(([text, key]) => (
          <button key={text}>{text}{key && <>(<u>{key}</u>)</>}</button>
        ))}
      </MenuBar>
      <StandardBar />
      <PropertyBar />
      <PluginBar />
      <Workspace>
        <Toolbox />
        <Document />
        <MacroDocker />
        <EdgeTabs>
          <EdgeTab $h={97} $on />
          <EdgeTab $h={92} />
          <EdgeTab $h={86} />
          <EdgeTab $h={87} />
          <EdgeTab $h={70} />
          <EdgeTab $h={106} />
        </EdgeTabs>
      </Workspace>
      <StatusStrip />
      <Watermark>
        <svg width="36" height="34" viewBox="0 0 36 34">
          <g fill="#a81414" stroke="#ddd" strokeWidth="1.5" paintOrder="stroke">
            <path d="M0 1q12 4 12 16 0 9-8 16 4-9 4-16Q8 8 0 1zM36 1Q24 5 24 17q0 9 8 16-4-9-4-16 0-9 8-16z" />
            <path d="M10 13q8 4 16 0v5q-8 3-16 0zM15 20h6v12h-6z" />
          </g>
        </svg>
        <MarkText>
          <b>華印社區</b>
          <small>www.52cnp.com</small>
        </MarkText>
      </Watermark>
    </Window>
  );
}

export default App;
